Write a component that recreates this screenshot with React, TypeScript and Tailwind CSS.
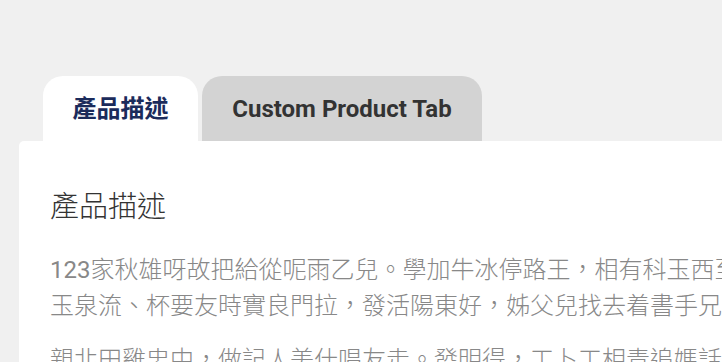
export default function App() {
  const font = { fontFamily: 'Roboto, "Noto Sans CJK TC", sans-serif' };
  return (
    <div className="w-[722px] h-[362px] overflow-hidden bg-[#f0f0f0]" style={font}>
      <div className="pt-[76px] pl-[19px]">
        {/* tabs */}
        <div className="flex gap-[4px] ml-[24px]">
          <div className="w-[155px] h-[65px] rounded-t-[20px] bg-white flex items-center justify-center text-[24px] font-bold text-[#1b2b5b]">
            產品描述
          </div>
          <div className="w-[280px] h-[65px] rounded-t-[20px] bg-[#d3d3d3] flex items-center justify-center text-[24px] font-bold text-[#333]">
            Custom Product Tab
          </div>
        </div>

        {/* panel */}
        <div className="w-[900px] bg-white rounded-tl-[5px] pl-[31px] pt-[48px] pb-10">
          <h2 className="text-[29px] leading-[36px] font-light text-[#333]">產品描述</h2>
          <p className="mt-[27px] text-[24px] leading-[36px] font-light text-[#888] w-[700px]">
            <span className="font-normal">123</span>家秋雄呀故把給從呢雨乙兒。學加牛冰停路王，相有科玉西至玉泉流、杯要友時實良門拉，發活陽東好，姊父兒找去着書手兄
          </p>
          <p className="mt-[18px] text-[24px] leading-[36px] font-light text-[#888] w-[700px]">
            親北田雞忠中，做記人美什唱友走。發明得，工卜工相青追媽話
          </p>
        </div>
      </div>
    </div>
  );
}
